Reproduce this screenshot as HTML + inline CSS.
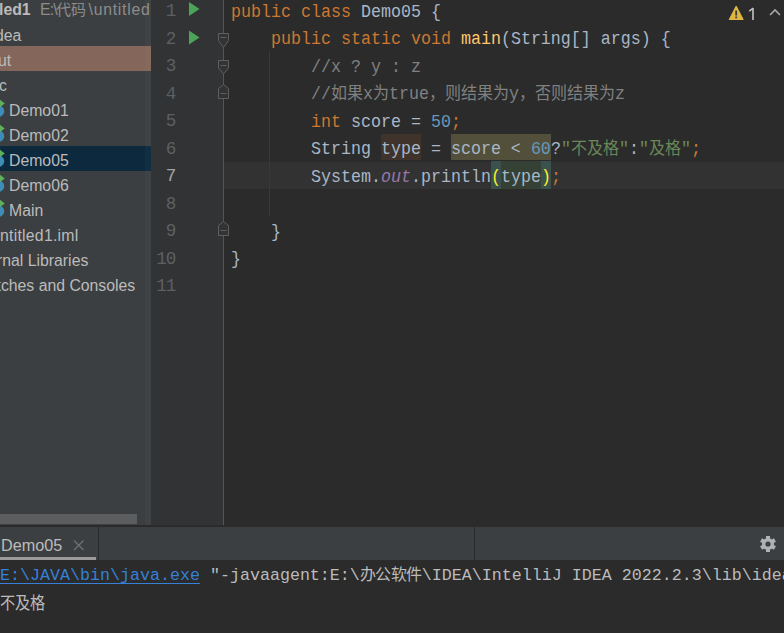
<!DOCTYPE html>
<html lang="zh-CN"><head><meta charset="utf-8">
<style>
*{margin:0;padding:0;box-sizing:border-box}
html,body{width:784px;height:633px;overflow:hidden;background:#2b2b2b}
body{position:relative;font-family:"Liberation Sans",sans-serif}
.abs{position:absolute}
#proj{left:0;top:0;width:151px;height:525px;background:#3c3f41;overflow:hidden}
.row{position:absolute;left:0;width:151px;height:25px;line-height:25px;font-size:15.8px;color:#bbbbbb;white-space:nowrap}
.row span{position:absolute;top:1.5px}
#gutter{left:151px;top:0;width:73px;height:525px;background:#313335}
#editor{left:224px;top:0;width:560px;height:526px;background:#2b2b2b;overflow:hidden}
.ln{position:absolute;left:137px;width:38px;text-align:right;font-family:"Liberation Mono",monospace;font-size:17.6px;letter-spacing:-1.2px;color:#5d6063;height:27.5px;line-height:27.5px;padding-top:1.5px}
.code{position:absolute;left:231px;height:27.5px;line-height:27.5px;padding-top:2px;font-family:"Liberation Mono",monospace;font-size:16.667px;color:#a9b7c6;white-space:pre;transform:scaleY(1.06);transform-origin:0 19px}
.kw{color:#cc7832}
.num{color:#6897bb}
.str{color:#6a8759}
.cm{color:#808080}
.fn{color:#ffc66d}
.st{color:#9876aa;font-style:italic}
.cj{font-size:16px}
.par{color:#ffef28}
#hdr{left:0;top:527px;width:784px;height:33px;background:#3c3f41}
#console{left:0;top:560px;width:784px;height:73px;background:#2b2b2b}
.con{position:absolute;left:0;font-family:"Liberation Mono",monospace;font-size:16.667px;color:#bbbbbb;white-space:pre;height:22px;line-height:22px}
</style></head><body>

<div id="proj" class="abs">
  <div class="row" style="top:-5px"><span style="left:-1px;font-weight:bold">led1</span><span style="left:40px;color:#8c8c8c;letter-spacing:-0.8px">E:\</span><span style="left:55.5px;color:#8c8c8c;font-size:15px">代码</span><span style="right:0.5px;color:#8c8c8c;letter-spacing:0.74px">\untitled</span></div>
  <div class="row" style="top:21px"><span style="left:-5px">dea</span></div>
  <div class="row" style="top:46px;background:#84665a"><span style="left:-2px">ut</span></div>
  <div class="row" style="top:71px"><span style="left:-1px">c</span></div>
  <div class="row" style="top:96px"><span style="left:9px">Demo01</span></div>
  <div class="row" style="top:121px"><span style="left:9px">Demo02</span></div>
  <div class="row" style="top:146px;background:#0d293e"><span style="left:9px">Demo05</span></div>
  <div class="row" style="top:171px"><span style="left:9px">Demo06</span></div>
  <div class="row" style="top:196px"><span style="left:9px">Main</span></div>
  <div class="row" style="top:221px"><span style="left:0px;letter-spacing:0.25px">ntitled1.iml</span></div>
  <div class="row" style="top:246px"><span style="left:-3px">rnal Libraries</span></div>
  <div class="row" style="top:271px"><span style="left:-3.5px">tches and Consoles</span></div>
  <svg class="abs" style="left:0;top:96px" width="10" height="25" viewBox="0 0 10 25"><ellipse cx="-3" cy="15.2" rx="7.2" ry="6.2" fill="#3e8db8"/><path d="M-4 0.5 L4.8 7.5 L-4 14 Z" fill="#5eb05a"/></svg>
  <svg class="abs" style="left:0;top:121px" width="10" height="25" viewBox="0 0 10 25"><ellipse cx="-3" cy="15.2" rx="7.2" ry="6.2" fill="#3e8db8"/><path d="M-4 0.5 L4.8 7.5 L-4 14 Z" fill="#5eb05a"/></svg>
  <svg class="abs" style="left:0;top:146px" width="10" height="25" viewBox="0 0 10 25"><ellipse cx="-3" cy="15.2" rx="7.2" ry="6.2" fill="#3e8db8"/><path d="M-4 0.5 L4.8 7.5 L-4 14 Z" fill="#5eb05a"/></svg>
  <svg class="abs" style="left:0;top:171px" width="10" height="25" viewBox="0 0 10 25"><ellipse cx="-3" cy="15.2" rx="7.2" ry="6.2" fill="#3e8db8"/><path d="M-4 0.5 L4.8 7.5 L-4 14 Z" fill="#5eb05a"/></svg>
  <svg class="abs" style="left:0;top:196px" width="10" height="25" viewBox="0 0 10 25"><ellipse cx="-3" cy="15.2" rx="7.2" ry="6.2" fill="#3e8db8"/><path d="M-4 0.5 L4.8 7.5 L-4 14 Z" fill="#5eb05a"/></svg>
  <div class="abs" style="left:0;top:514px;width:137px;height:10px;background:#5b5d5f"></div>
</div>

<div id="gutter" class="abs"></div>
<div id="editor" class="abs"></div>
<!-- current line -->
<div class="abs" style="left:224px;top:161.5px;width:560px;height:27.5px;background:#323232"></div>
<!-- highlights -->
<div class="abs" style="left:381px;top:134px;width:40px;height:26px;background:#40332b"></div>
<div class="abs" style="left:451px;top:134px;width:100px;height:26px;background:#52503a"></div>
<div class="abs" style="left:491px;top:161px;width:10px;height:28px;background:#3b514d"></div>
<div class="abs" style="left:501px;top:161px;width:40px;height:28px;background:#344134"></div>
<div class="abs" style="left:541px;top:161px;width:10px;height:28px;background:#3b514d"></div>
<!-- gutter line + indent guide -->
<div class="abs" style="left:145px;top:0;width:6px;height:525px;background:rgba(255,255,255,0.025)"></div>
<div class="abs" style="left:218px;top:0;width:1px;height:525px;background:#343638"></div>
<div class="abs" style="left:223px;top:0;width:1px;height:525px;background:#555555"></div>
<div class="abs" style="left:269px;top:51px;width:1px;height:165px;background:#393939"></div>
<svg class="abs" style="left:150px;top:0" width="80" height="300" viewBox="150 0 80 300">
  <g fill="#4ca458"><path d="M189 2 L199.5 9 L189 16 Z"/><path d="M189 30.5 L199.5 37.5 L189 44.5 Z"/></g>
  <g fill="#313335" stroke="#5f5f5f" stroke-width="1">
    <path d="M218.5 33.5 H228.5 V40.5 L223.5 47.5 L218.5 40.5 Z"/>
    <line x1="220.5" y1="37.5" x2="226.5" y2="37.5"/>
    <path d="M218.5 60.5 H228.5 V68 L223.5 74 L218.5 68 Z"/>
    <line x1="220.5" y1="65.5" x2="226.5" y2="65.5"/>
    <path d="M218.5 98.5 H228.5 V88.5 L223.5 84.5 L218.5 88.5 Z"/>
    <line x1="220.5" y1="93.5" x2="226.5" y2="93.5"/>
    <path d="M218.5 235.5 H228.5 V225.5 L223.5 221.5 L218.5 225.5 Z"/>
    <line x1="220.5" y1="230.5" x2="226.5" y2="230.5"/>
  </g>
</svg>

<div class="ln" style="top:-3.5px">1</div>
<div class="ln" style="top:24px">2</div>
<div class="ln" style="top:51.5px">3</div>
<div class="ln" style="top:79px">4</div>
<div class="ln" style="top:106.5px">5</div>
<div class="ln" style="top:134px">6</div>
<div class="ln" style="top:161.5px;color:#a4a3a3">7</div>
<div class="ln" style="top:189px">8</div>
<div class="ln" style="top:216.5px">9</div>
<div class="ln" style="top:244px">10</div>
<div class="ln" style="top:271.5px">11</div>

<div class="code" style="top:-3.5px"><span class="kw">public class </span>Demo05 {</div>
<div class="code" style="top:24px">    <span class="kw">public static void </span><span class="fn">main</span>(String[] args) {</div>
<div class="code" style="top:51.5px">        <span class="cm">//x ? y : z</span></div>
<div class="code" style="top:79px">        <span class="cm">//<span class="cj">如果</span>x<span class="cj">为</span>true<span class="cj">，则结果为</span>y<span class="cj">，否则结果为</span>z</span></div>
<div class="code" style="top:106.5px">        <span class="kw">int </span>score = <span class="num">50</span><span class="kw">;</span></div>
<div class="code" style="top:134px">        String type = score &lt; <span class="num">60</span>?<span class="str">"<span class="cj">不及格</span>"</span>:<span class="str">"<span class="cj">及格</span>"</span><span class="kw">;</span></div>
<div class="code" style="top:161.5px">        System.<span class="st">out</span>.println<span class="par">(</span>type<span class="par">)</span><span class="kw">;</span></div>
<div class="code" style="top:216.5px">    }</div>
<div class="code" style="top:244px">}</div>

<div id="hdr" class="abs"></div>
<div class="abs" style="left:0;top:525px;width:784px;height:2px;background:#2b2b2b"></div>
<div class="abs" style="left:0;top:557px;width:96px;height:3px;background:#9a9a9a"></div>
<div class="abs" style="left:98px;top:527px;width:1px;height:33px;background:#2b2b2b"></div>
<div class="abs" style="left:474px;top:527px;width:1px;height:33px;background:#2b2b2b"></div>
<div class="abs" style="left:1px;top:527.5px;height:34px;line-height:34px;font-size:16.2px;color:#bbbbbb;white-space:nowrap">Demo05</div>
<svg class="abs" style="left:72px;top:539px" width="14" height="13" viewBox="0 0 14 13"><path d="M2 1.5 L11.5 11 M11.5 1.5 L2 11" stroke="#6f6f6f" stroke-width="1.3"/></svg>
<svg class="abs" style="left:758px;top:534px" width="20" height="20" viewBox="0 0 20 20">
  <g fill="#afb1b3"><circle cx="10" cy="10" r="6"/>
  <rect x="8" y="2" width="4" height="16"/>
  <rect x="8" y="2" width="4" height="16" transform="rotate(60 10 10)"/>
  <rect x="8" y="2" width="4" height="16" transform="rotate(-60 10 10)"/></g>
  <circle cx="10" cy="10" r="2.6" fill="#3c3f41"/>
</svg>
<svg class="abs" style="left:726px;top:3px" width="20" height="19" viewBox="0 0 20 19">
  <path d="M10.2 3 L17.2 16.5 H3.2 Z" fill="#ddb644" stroke="#ddb644" stroke-width="1" stroke-linejoin="round"/>
  <rect x="9.3" y="7.5" width="1.8" height="5" fill="#3a3a3a"/><rect x="9.3" y="13.5" width="1.8" height="1.8" fill="#3a3a3a"/>
</svg>
<svg class="abs" style="left:746px;top:6px" width="12" height="16" viewBox="0 0 12 16"><path d="M7 2.2 V14" stroke="#c4c4c4" stroke-width="1.6"/><path d="M7.2 2.2 L3.2 5.2" stroke="#c4c4c4" stroke-width="1.5"/></svg>
<svg class="abs" style="left:767px;top:6px" width="16" height="12" viewBox="0 0 16 12"><path d="M3 9 L8 4 L13 9" fill="none" stroke="#a8a8a8" stroke-width="1.6"/></svg>
<div id="console" class="abs"></div>
<div class="con" style="top:565px"><span style="color:#3580d8;text-decoration:underline;text-underline-offset:3px">E:\JAVA\bin\java.exe</span> "-javaagent:E:\<span class="cj" style="letter-spacing:-0.5px">办公软件</span>\IDEA\IntelliJ IDEA 2022.2.3\lib\idea_rt.jar</div>
<div class="con" style="top:592px"><span class="cj" style="display:inline-block;transform:scale(0.95,1.1);transform-origin:0 0;position:relative;top:0.3px">不及格</span></div>

</body></html>
